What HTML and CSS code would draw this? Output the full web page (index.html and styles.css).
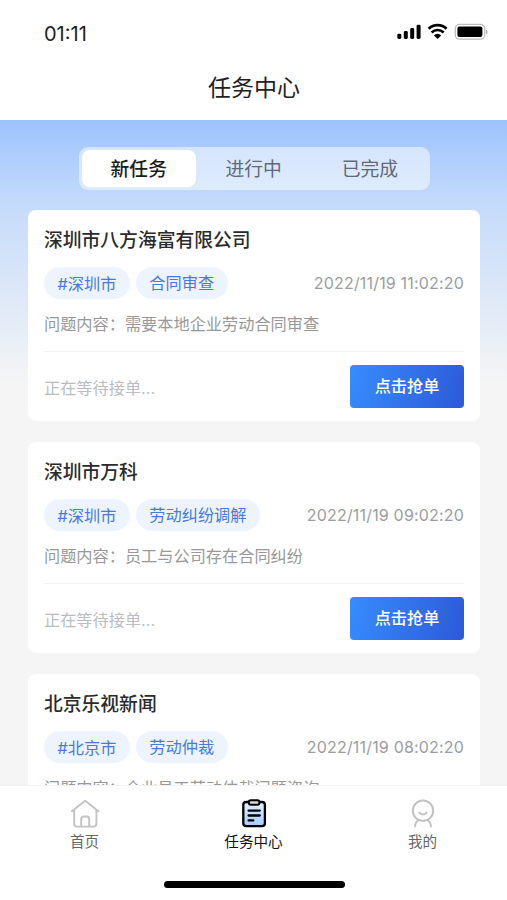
FILE: index.html
```html
<!DOCTYPE html>
<html lang="zh-CN">
<head>
<meta charset="utf-8">
<title>任务中心</title>
<link rel="stylesheet" href="styles.css">
</head>
<body>
<div class="app">
  <header class="header">
    <div class="status">
      <span class="time">01:11</span>
      <svg class="status-icons" width="94" height="20" viewBox="0 0 94 20">
        <rect x="1.3" y="11.7" width="4" height="5.3" rx="1.4"/>
        <rect x="7.8" y="9" width="4" height="8" rx="1.4"/>
        <rect x="14.2" y="6" width="4" height="11" rx="1.4"/>
        <rect x="20.6" y="2.7" width="4" height="14.3" rx="1.4"/>
        <path d="M32.6 6.8a13.1 13.1 0 0 1 18 0M35.6 10.4a8.7 8.7 0 0 1 12 0" fill="none" stroke="#000" stroke-width="2.7"/>
        <path d="M38 13.4a5 5 0 0 1 7.2 0L41.6 17z"/>
        <rect x="59.3" y="2.4" width="29.4" height="14.8" rx="4.2" fill="#fff" stroke="#bdbdbd" stroke-width="1.3"/>
        <rect x="61.4" y="4.6" width="25" height="10.4" rx="2"/>
        <path d="M90 7.6a2.5 2.5 0 0 1 0 4.6z" fill="#aaa"/>
      </svg>
    </div>
    <h1 class="page-title">任务中心</h1>
  </header>

  <main class="content">
    <nav class="tabs">
      <span class="tab active">新任务</span>
      <span class="tab">进行中</span>
      <span class="tab">已完成</span>
    </nav>

    <article class="card">
      <h2 class="name">深圳市八方海富有限公司</h2>
      <div class="meta">
        <span class="tag city">#深圳市</span><span class="tag">合同审查</span>
        <time class="date">2022/11/19 11:02:20</time>
      </div>
      <p class="question">问题内容：需要本地企业劳动合同审查</p>
      <div class="foot"><span class="waiting">正在等待接单...</span><button class="grab">点击抢单</button></div>
    </article>

    <article class="card">
      <h2 class="name">深圳市万科</h2>
      <div class="meta">
        <span class="tag city">#深圳市</span><span class="tag">劳动纠纷调解</span>
        <time class="date">2022/11/19 09:02:20</time>
      </div>
      <p class="question">问题内容：员工与公司存在合同纠纷</p>
      <div class="foot"><span class="waiting">正在等待接单...</span><button class="grab">点击抢单</button></div>
    </article>

    <article class="card">
      <h2 class="name">北京乐视新闻</h2>
      <div class="meta">
        <span class="tag city">#北京市</span><span class="tag">劳动仲裁</span>
        <time class="date">2022/11/19 08:02:20</time>
      </div>
      <p class="question">问题内容：企业员工劳动仲裁问题咨询</p>
    </article>
  </main>

  <footer class="bottom">
    <nav class="nav">
      <span class="nav-item">
        <svg width="30" height="30" viewBox="0 0 30 30" fill="none" stroke="#c3c3c3" stroke-width="1.9" stroke-linecap="round" stroke-linejoin="round">
          <path d="M1.8 12.2 15.2 1.7l13.2 10.5M4.2 11v13.8a2.8 2.8 0 0 0 2.8 2.8h16.6a2.8 2.8 0 0 0 2.8-2.8V11M11.2 27.3v-7a2.8 2.8 0 0 1 2.8-2.8h2.4a2.8 2.8 0 0 1 2.8 2.8v7"/>
        </svg>
        首页
      </span>
      <span class="nav-item active">
        <svg width="30" height="30" viewBox="0 0 30 30" fill="none" stroke="#000" stroke-width="2.3" stroke-linecap="round" stroke-linejoin="round">
          <defs><linearGradient id="board" x2="0" y2="1"><stop offset="0" stop-color="#e8f1ff"/><stop offset="1" stop-color="#a5ccff"/></linearGradient></defs>
          <rect x="4.3" y="3" width="21.6" height="24.1" rx="2.8" fill="url(#board)"/>
          <rect x="9.8" y="1.2" width="10.6" height="4.5" rx="2" fill="#d9d9d9" stroke-width="2"/>
          <path d="M9.6 11.6h11.2M9.6 16.5h11.2M9.6 21.4h4.7"/>
        </svg>
        任务中心
      </span>
      <span class="nav-item">
        <svg width="30" height="30" viewBox="0 0 30 30" fill="none" stroke="#c3c3c3" stroke-width="2" stroke-linecap="round">
          <circle cx="15" cy="11.7" r="10.2"/>
          <path d="M11.3 13.6q3.7 4 7.4 0M10.4 21.4Q7.5 22.8 7 27.3M19.6 21.4q2.9 1.4 3.4 5.9"/>
        </svg>
        我的
      </span>
    </nav>
    <div class="home-bar"></div>
  </footer>
</div>
</body>
</html>
```
FILE: styles.css
```css
* { box-sizing: border-box; }

body {
  margin: 0;
  font-family: Inter, "Noto Sans CJK SC", sans-serif;
  background: #fff;
}

.app {
  width: 507px;
  height: 900px;
  display: flex;
  flex-direction: column;
  overflow: hidden;
}

.header {
  flex: none;
  height: 120px;
  background: #fff;
}

.status {
  display: flex;
  justify-content: space-between;
  align-items: center;
  height: 42px;
  padding: 22px 17px 0 44px;
}

.time {
  font-size: 20px;
  line-height: 24px;
  margin-top: 3px;
  color: #222;
}

.page-title {
  margin: 29px 0 0 1px;
  text-align: center;
  font-size: 23px;
  line-height: 34px;
  font-weight: 400;
  color: #222;
}

.content {
  flex: 1;
  min-height: 0;
  overflow: hidden;
  padding: 27px 27px 0 28px;
  background: linear-gradient(#9dc3fc 0, #c5dbfa 85px, #f5f5f5 265px);
}

.tabs {
  display: flex;
  width: 351px;
  height: 43px;
  margin: 0 0 20px 51px;
  padding: 3px 2px 3px 3px;
  border-radius: 9px;
  background: rgba(255, 255, 255, 0.5);
}

.tab {
  flex: 1;
  text-align: center;
  font-size: 18.8px;
  line-height: 39px;
  color: #5f6b7a;
}

.tab.active {
  flex: none;
  width: 113.5px;
  border-radius: 8px;
  background: #fff;
  color: #1c1c1c;
  font-weight: 500;
}

.card {
  height: 211px;
  margin-bottom: 21px;
  padding: 18px 16px 0;
  border-radius: 8px;
  background: #fff;
}

.name {
  margin: 0;
  font-size: 18.8px;
  line-height: 26px;
  font-weight: 500;
  color: #2b2b2b;
}

.meta {
  display: flex;
  align-items: center;
  height: 32px;
  margin-top: 13px;
}

.tag {
  height: 32px;
  padding: 0 13.5px;
  margin-right: 6px;
  border-radius: 16px;
  background: #edf4ff;
  font-size: 16.2px;
  line-height: 32px;
  color: #467bdc;
}

.tag.city { line-height: 34px; }

.date {
  margin-left: auto;
  font-size: 16px;
  letter-spacing: 0.18px;
  color: #9b9da0;
}

.question {
  margin: 13px 0 0;
  font-size: 16.2px;
  line-height: 25px;
  color: #999;
}

.foot {
  display: flex;
  justify-content: space-between;
  align-items: center;
  margin-top: 14px;
  padding-top: 13px;
  border-top: 1px solid #f1f1f1;
}

.waiting {
  font-size: 16.2px;
  color: #bbbdc1;
}

.grab {
  width: 114px;
  height: 43px;
  padding: 0;
  border: 0;
  border-radius: 4px;
  background: linear-gradient(105deg, #378dfd, #2d59d9);
  color: #fff;
  font: 500 16.2px/43px Inter, "Noto Sans CJK SC", sans-serif;
}

.bottom {
  flex: none;
  height: 114px;
  display: flex;
  flex-direction: column;
  align-items: center;
  background: #fff;
  box-shadow: 0 -1px 0 #f3f3f3;
}

.nav {
  display: flex;
  width: 100%;
  padding-top: 13px;
}

.nav-item {
  flex: 1;
  display: flex;
  flex-direction: column;
  align-items: center;
  font-size: 14.6px;
  line-height: 26px;
  color: #666;
}

.nav-item.active { color: #111; }

.home-bar {
  width: 181px;
  height: 7px;
  margin: 26px 0 0 2px;
  border-radius: 4px;
  background: #000;
}
```
